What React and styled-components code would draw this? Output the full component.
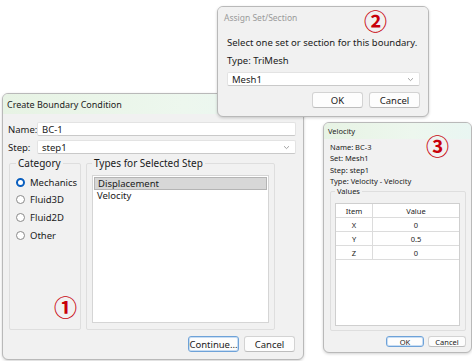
import React from 'react';
import styled, { createGlobalStyle, css } from 'styled-components';

const GlobalStyle = createGlobalStyle`
  html, body {
    margin: 0;
    padding: 0;
    background: #ffffff;
  }
  body {
    font-family: 'Noto Sans', 'Open Sans', sans-serif;
    color: #1a1a1a;
  }
  #root {
    width: 472px;
    height: 361px;
  }
`;

const Desktop = styled.div`
  position: relative;
  width: 472px;
  height: 361px;
  overflow: hidden;
  background: #fff;
`;

// windows sit on a free canvas, so they are placed by coordinates
const Window = styled.div`
  position: absolute;
  left: ${p => p.x}px;
  top: ${p => p.y}px;
  width: ${p => p.w}px;
  height: ${p => p.h}px;
  box-sizing: border-box;
  display: flex;
  flex-direction: column;
  background: #f1f1f1;
  border: 1px solid #b9b9b9;
  border-radius: 6px;
  box-shadow: 0 1px 3px rgba(0,0,0,0.18);
  overflow: hidden;
  z-index: ${p => p.z || 1};
`;

const TitleBar = styled.div`
  flex: 0 0 ${p => p.h}px;
  display: flex;
  align-items: center;
  padding-left: ${p => p.pad}px;
  font-size: ${p => p.size}px;
  color: ${p => p.inactive ? '#9a9a9a' : '#222'};
  background: ${p => p.inactive ? '#f1f1f1' : 'linear-gradient(90deg, #e7f3e4 0%, #edf7ee 60%, #e9f6f2 100%)'};
  white-space: nowrap;
`;

const Body = styled.div`
  flex: 1;
  display: flex;
  flex-direction: column;
  padding: ${p => p.pad};
  gap: ${p => p.gap}px;
  min-height: 0;
`;

const FieldRow = styled.div`
  display: flex;
  align-items: center;
  height: 14px;
  font-size: 9.5px;
`;

const FieldLabel = styled.span`
  width: 29px;
  flex: 0 0 29px;
`;

const Input = styled.div`
  flex: ${p => p.fixed ? '0 0 14px' : '1'};
  height: 14px;
  box-sizing: border-box;
  display: flex;
  align-items: center;
  justify-content: space-between;
  padding: 0 5px 0 4px;
  background: #fff;
  border: 1px solid #e3e3e3;
  border-bottom-color: #c9c9c9;
  border-radius: 2px;
  font-size: 9.5px;
`;

const Chevron = () => (
  <svg width="7" height="5" viewBox="0 0 7 5">
    <path d="M1 1.2 L3.5 3.6 L6 1.2" fill="none" stroke="#8c8c8c" strokeWidth="0.8" />
  </svg>
);

const Groups = styled.div`
  flex: 1;
  display: flex;
  gap: 5px;
  padding-left: ${p => p.pl || 0}px;
  min-height: 0;
`;

const Group = styled.fieldset`
  margin: 0;
  box-sizing: border-box;
  width: ${p => p.w}px;
  flex: 0 0 ${p => p.w}px;
  padding: ${p => p.pad};
  border: 1px solid #dedede;
  border-radius: 2px;
  display: flex;
  flex-direction: column;
  min-width: 0;
`;

const Legend = styled.legend`
  padding: 0 2px;
  font-size: ${p => p.size || 10}px;
  line-height: ${p => p.lh || 11}px;
  color: #1a1a1a;
`;

const RadioList = styled.div`
  display: flex;
  flex-direction: column;
  gap: 3.7px;
  padding-top: 6px;
`;

const RadioItem = styled.div`
  display: flex;
  align-items: center;
  gap: 5px;
  height: 14px;
  font-size: 9.5px;
`;

const RadioDot = styled.span`
  flex: 0 0 9px;
  width: 9px;
  height: 9px;
  box-sizing: border-box;
  border-radius: 50%;
  background: #fff;
  border: 1px solid #8a8a8a;
  ${p => p.checked && css`
    border: 2.7px solid #0a5fbf;
  `}
`;

const ListBox = styled.div`
  flex: 1;
  margin-top: 6px;
  background: #fff;
  border: 1px solid #d5d5d5;
  display: flex;
  flex-direction: column;
  padding: 1px 0 0 1px;
`;

const ListItem = styled.div`
  height: 11px;
  line-height: 11px;
  padding-left: 3px;
  font-size: 9.5px;
  ${p => p.selected && css`
    background: #d7d7d7;
    border: 1px solid #b4b4b4;
    margin-right: 1px;
  `}
`;

const ButtonRow = styled.div`
  display: flex;
  justify-content: flex-end;
  gap: ${p => p.gap}px;
  padding-right: ${p => p.pr || 0}px;
  margin-top: ${p => p.mt || 0}px;
`;

const Button = styled.button`
  width: ${p => p.w}px;
  height: ${p => p.h}px;
  box-sizing: border-box;
  padding: 0;
  font-family: inherit;
  font-size: ${p => p.size}px;
  color: #1a1a1a;
  background: #fdfdfd;
  border: 1px solid #d3d3d3;
  border-bottom-color: #bdbdbd;
  border-radius: 3px;
  ${p => p.primary && css`
    border: 1px solid #6ea2d8;
    box-shadow: inset 0 0 0 1px #c8ddf3;
  `}
`;

const Text = styled.div`
  font-size: ${p => p.size}px;
  line-height: ${p => p.lh}px;
  white-space: nowrap;
`;

const InfoLines = styled.div`
  display: flex;
  flex-direction: column;
`;

const Table = styled.div`
  flex: 1;
  margin-top: 7px;
  background: #fff;
  border: 1px solid #cfcfcf;
  display: grid;
  grid-template-columns: 37px 1fr;
  grid-auto-rows: 14px;
  align-content: start;
`;

const Cell = styled.div`
  display: flex;
  align-items: center;
  justify-content: center;
  font-size: 7.5px;
  border-bottom: 1px solid #dcdcdc;
  border-right: ${p => p.first ? '1px solid #dcdcdc' : 'none'};
`;

const Marker = styled.span`
  position: absolute;
  left: ${p => p.x}px;
  top: ${p => p.y}px;
  font-family: 'Noto Sans CJK SC', 'DejaVu Sans', sans-serif;
  font-weight: 700;
  font-size: 23px;
  line-height: 23px;
  color: #c8000a;
  z-index: 10;
`;

const rows = [
  { item: 'X', value: '0' },
  { item: 'Y', value: '0.5' },
  { item: 'Z', value: '0' },
];

export default function App() {
  return (
    <Desktop>
      <GlobalStyle />

      <Window x={2} y={93} w={302} h={267} z={1}>
        <TitleBar h={20} pad={4} size={9}>Create Boundary Condition</TitleBar>
        <Body pad="8px 7px 7px 5px" gap={4}>
          <FieldRow>
            <FieldLabel>Name:</FieldLabel>
            <Input>BC-1</Input>
          </FieldRow>
          <FieldRow>
            <FieldLabel>Step:</FieldLabel>
            <Input>step1<Chevron /></Input>
          </FieldRow>
          <Groups pl={1}>
            <Group w={72} pad="0 6px 0 6px">
              <Legend>Category</Legend>
              <RadioList>
                <RadioItem><RadioDot checked />Mechanics</RadioItem>
                <RadioItem><RadioDot />Fluid3D</RadioItem>
                <RadioItem><RadioDot />Fluid2D</RadioItem>
                <RadioItem><RadioDot />Other</RadioItem>
              </RadioList>
            </Group>
            <Group w={189} pad="0 5px 6px 5px">
              <Legend>Types for Selected Step</Legend>
              <ListBox>
                <ListItem selected>Displacement</ListItem>
                <ListItem>Velocity</ListItem>
              </ListBox>
            </Group>
          </Groups>
          <ButtonRow gap={5} pr={1} mt={2}>
            <Button w={51} h={16} size={9.5} primary>Continue...</Button>
            <Button w={51} h={16} size={9.5}>Cancel</Button>
          </ButtonRow>
        </Body>
      </Window>

      <Window x={217} y={6} w={212} h={111} z={2}>
        <TitleBar h={20} pad={6} size={8.5} inactive>Assign Set/Section</TitleBar>
        <Body pad="9px 8px 8px 9px" gap={4}>
          <Text size={9.5} lh={14}>Select one set or section for this boundary.</Text>
          <Text size={9.5} lh={14}>Type: TriMesh</Text>
          <Input fixed>Mesh1<Chevron /></Input>
          <ButtonRow gap={6} mt={2}>
            <Button w={51} h={16} size={9.5}>OK</Button>
            <Button w={51} h={16} size={9.5}>Cancel</Button>
          </ButtonRow>
        </Body>
      </Window>

      <Window x={323} y={122} w={149} h={231} z={3}>
        <TitleBar h={16} pad={4} size={7.5}>Velocity</TitleBar>
        <Body pad="3px 5px 5px 6px" gap={0}>
          <InfoLines>
            <Text size={7.5} lh={11.3}>Name: BC-3</Text>
            <Text size={7.5} lh={11.3}>Set: Mesh1</Text>
            <Text size={7.5} lh={11.3}>Step: step1</Text>
            <Text size={7.5} lh={11.3}>Type: Velocity - Velocity</Text>
          </InfoLines>
          <Groups>
            <Group w={136} pad="0 5px 4px 4px">
              <Legend size={7.5} lh={9}>Values</Legend>
              <Table>
                <Cell first>Item</Cell>
                <Cell>Value</Cell>
                {rows.map(r => (
                  <React.Fragment key={r.item}>
                    <Cell first>{r.item}</Cell>
                    <Cell>{r.value}</Cell>
                  </React.Fragment>
                ))}
              </Table>
            </Group>
          </Groups>
          <ButtonRow gap={4} mt={5}>
            <Button w={38} h={11} size={7.5} primary>OK</Button>
            <Button w={38} h={11} size={7.5}>Cancel</Button>
          </ButtonRow>
        </Body>
      </Window>

      <Marker x={54} y={295}>①</Marker>
      <Marker x={364} y={9}>②</Marker>
      <Marker x={426} y={134}>③</Marker>
    </Desktop>
  );
}
